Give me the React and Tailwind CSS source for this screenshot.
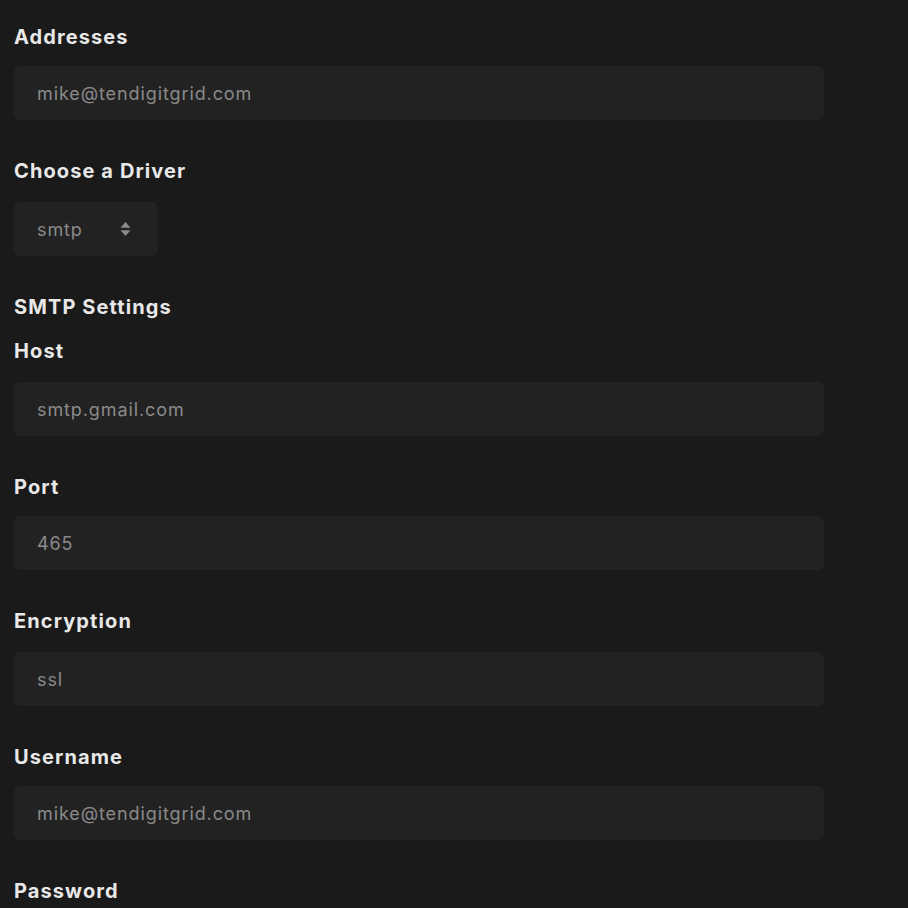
import React from 'react';

function Label({ children, className = '' }) {
  return (
    <div className={`text-[20px] leading-[30px] pt-[1px] -mb-[1px] font-bold tracking-[1.1px] text-[#e8e8e8] ${className}`}>
      {children}
    </div>
  );
}

function TextBox({ value, className = '' }) {
  return (
    <div className={`h-[54px] w-[810px] rounded-md bg-[#222222] px-[23px] flex items-center text-[18px] tracking-[0.9px] text-[#8a8a8a] ${className}`}>
      {value}
    </div>
  );
}

export default function App() {
  return (
    <div className="min-h-[908px] bg-[#1a1a1a] pl-[14px] pt-[21px]" style={{ fontFamily: 'Inter, "Noto Sans", sans-serif' }}>
      <Label>Addresses</Label>
      <TextBox className="mt-[15px]" value="mike@tendigitgrid.com" />

      <Label className="mt-[35px]">Choose a Driver</Label>
      <div className="mt-[17px] h-[54px] w-[144px] rounded-md bg-[#222222] pl-[23px] pr-[27px] flex items-center justify-between text-[18px] tracking-[0.9px] text-[#8a8a8a]">
        <span>smtp</span>
        <svg width="11" height="16" viewBox="0 0 11 16" fill="#8a8a8a">
          <path d="M5.5 1 L10.5 6.8 H0.5 Z" />
          <path d="M5.5 15 L10.5 9.2 H0.5 Z" />
        </svg>
      </div>

      <Label className="mt-[35px]">SMTP Settings</Label>

      <Label className="mt-[14px]">Host</Label>
      <TextBox className="mt-[17px]" value="smtp.gmail.com" />

      <Label className="mt-[35px]">Port</Label>
      <TextBox className="mt-[15px]" value="465" />

      <Label className="mt-[35px]">Encryption</Label>
      <TextBox className="mt-[17px]" value="ssl" />

      <Label className="mt-[35px]">Username</Label>
      <TextBox className="mt-[15px]" value="mike@tendigitgrid.com" />

      <Label className="mt-[35px]">Password</Label>
    </div>
  );
}
